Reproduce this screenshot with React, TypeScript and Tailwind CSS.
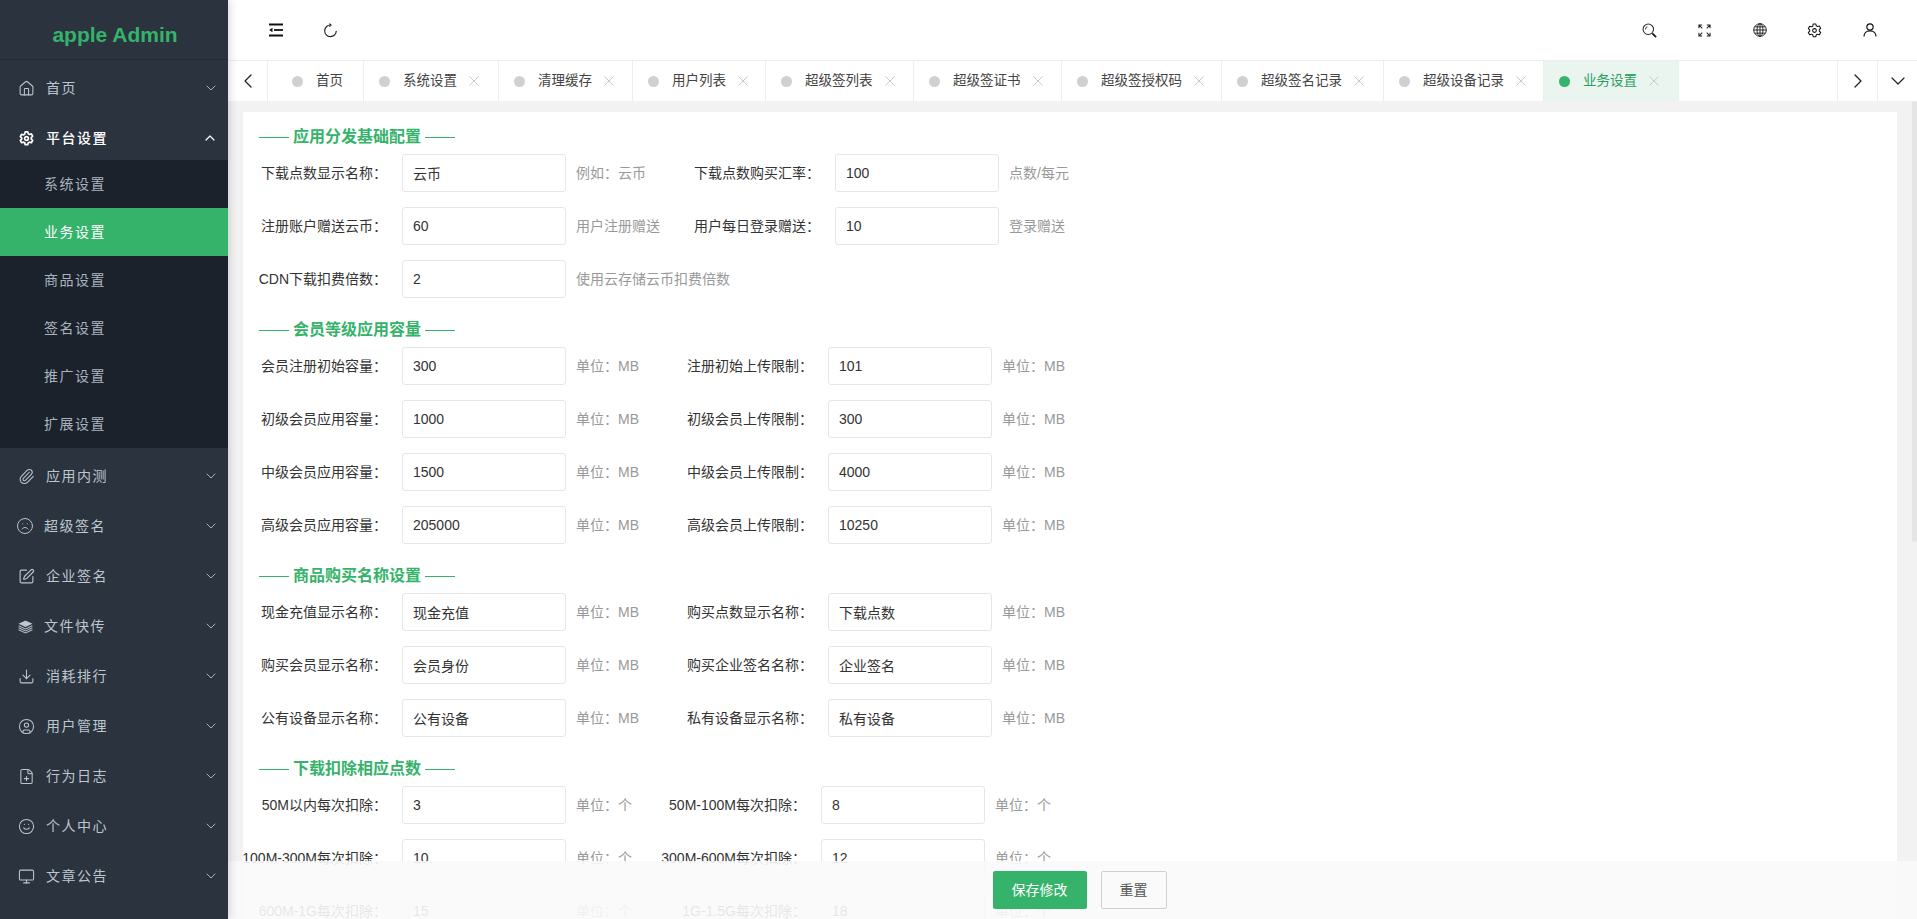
import React from "react";
import { ChevronDown, ChevronLeft, ChevronRight, ChevronUp, Home, Paperclip, Frown, SquarePen, Download, CircleUser, FilePlus, Smile, Monitor } from "lucide-react";

const ICON = "w-[17px] h-[17px] shrink-0";
const Layers = () => (
  <svg viewBox="0 0 16 16" className="w-[15px] h-[15px] shrink-0" fill="currentColor">
    <path d="M8 1.5 15.5 5 8 8.5.5 5z" />
    <path d="M.8 6.6 8 10l7.2-3.4.3 1L8 11.1.5 7.6z" />
    <path d="M.8 8.8 8 12.2l7.2-3.4.3 1L8 13.3.5 9.8z" />
    <path d="M.8 11 8 14.4l7.2-3.4.3 1L8 15.5.5 12z" />
  </svg>
);
const IndentIcon = () => (
  <svg viewBox="0 0 16 14" className="w-[16px] h-[14px]" fill="none">
    <path d="M1 1.5h14M1 12.5h14" stroke="#111" strokeWidth="1.8" />
    <path d="M6 7h9" stroke="#111" strokeWidth="1.8" />
    <path d="M4.5 4.8v4.4L1.2 7z" fill="#111" />
  </svg>
);
const ReloadIcon = () => (
  <svg viewBox="0 0 16 16" className="w-[15px] h-[15px]" fill="none" stroke="#222" strokeWidth="1.2">
    <path d="M8.4 2.2A6.2 6.2 0 1 0 14.2 8.4" />
    <path d="M6.8.6 8.6 2.2 6.8 3.8" strokeWidth="1.1" />
  </svg>
);
const SearchIcon = () => (
  <svg viewBox="0 0 16 16" className="w-[15px] h-[15px]" fill="none" stroke="#222">
    <circle cx="6.7" cy="6.7" r="5.6" strokeWidth="1.1" />
    <path d="M3.7 6.8a3 3 0 0 1 2-3" strokeWidth="1" />
    <path d="m11 11 4 4" strokeWidth="2" />
  </svg>
);
const FullIcon = () => (
  <svg viewBox="0 0 14 14" className="w-[13px] h-[13px]" fill="none" stroke="#222" strokeWidth="1.1">
    <path d="M1 4.5V1h3.5M1 1l3.6 3.6M13 4.5V1H9.5M13 1 9.4 4.6M1 9.5V13h3.5M1 13l3.6-3.6M13 9.5V13H9.5M13 13 9.4 9.4" />
  </svg>
);
const GlobeIcon = () => (
  <svg viewBox="0 0 16 16" className="w-[14px] h-[14px]" fill="none" stroke="#111" strokeWidth="1">
    <circle cx="8" cy="8" r="7.2" />
    <ellipse cx="8" cy="8" rx="3.4" ry="7.2" />
    <path d="M8 .8v14.4M.8 8h14.4M1.8 4.4h12.4M1.8 11.6h12.4" />
  </svg>
);
const GearShape = ({ className, sw }: { className: string; sw: number }) => (
  <svg viewBox="0 0 16 16" className={className} fill="none" stroke="currentColor" strokeWidth={sw} strokeLinejoin="round">
    <path d="M6.6 1h2.8l.5 2 1.3.7 2-.6 1.4 2.5-1.5 1.4v1.6l1.5 1.4-1.4 2.5-2-.6-1.3.7-.5 2H6.6l-.5-2-1.3-.7-2 .6-1.4-2.5 1.5-1.4V7.4L1.4 6l1.4-2.5 2 .6 1.3-.7z" />
    <circle cx="8" cy="8" r="2" />
  </svg>
);
const UserIcon = () => (
  <svg viewBox="0 0 14 14" className="w-[14px] h-[14px]" fill="none" stroke="#111" strokeWidth="1.2">
    <circle cx="7" cy="4" r="3.2" />
    <path d="M1 13.5c0-3.2 2.4-5.7 6-5.7s6 2.5 6 5.7" />
  </svg>
);
const CloseIcon = () => (
  <svg viewBox="0 0 10 10" className="w-[10px] h-[10px] ml-[12px] shrink-0" fill="none" stroke="#c8c8c8" strokeWidth="1">
    <path d="M.5.5l9 9M9.5.5l-9 9" />
  </svg>
);

const nav1 = [{ label: "首页", icon: <Home className={ICON} strokeWidth={1.5} /> }];
const nav2 = [
  { label: "应用内测", icon: <Paperclip className={ICON} strokeWidth={1.5} /> },
  { label: "超级签名", icon: <Frown className="w-[18px] h-[18px] shrink-0" strokeWidth={1.3} />, shift: true },
  { label: "企业签名", icon: <SquarePen className={ICON} strokeWidth={1.6} /> },
  { label: "文件快传", icon: <Layers />, shift: true },
  { label: "消耗排行", icon: <Download className={ICON} strokeWidth={1.5} /> },
  { label: "用户管理", icon: <CircleUser className={ICON} strokeWidth={1.5} /> },
  { label: "行为日志", icon: <FilePlus className={ICON} strokeWidth={1.5} /> },
  { label: "个人中心", icon: <Smile className={ICON} strokeWidth={1.5} /> },
  { label: "文章公告", icon: <Monitor className={ICON} strokeWidth={1.5} /> },
];
const subs = ["系统设置", "业务设置", "商品设置", "签名设置", "推广设置", "扩展设置"];

const NavItem = ({ label, icon, shift }: { label: string; icon: React.ReactNode; shift?: boolean }) => (
  <div className="flex items-center h-[50px] text-[#bcc6d0]">
    <span className={shift ? "w-[18px] ml-[16px] flex justify-center" : "w-[18px] ml-[17px] flex justify-center"}>{icon}</span>
    <span className={shift ? "ml-[10px] text-[14px] tracking-[1.5px]" : "ml-[11px] text-[14px] tracking-[1.5px]"}>{label}</span>
    <ChevronDown className="w-[16px] h-[16px] ml-auto mr-[9px]" strokeWidth={1.3} />
  </div>
);

const tabs: { label: string; w: string; close?: boolean; active?: boolean }[] = [
  { label: "首页", w: "w-[96px] pl-[24px]" },
  { label: "系统设置", w: "w-[135px] pl-[15px]", close: true },
  { label: "清理缓存", w: "w-[134px] pl-[15px]", close: true },
  { label: "用户列表", w: "w-[133px] pl-[15px]", close: true },
  { label: "超级签列表", w: "w-[148px] pl-[15px]", close: true },
  { label: "超级签证书", w: "w-[148px] pl-[15px]", close: true },
  { label: "超级签授权码", w: "w-[160px] pl-[15px]", close: true },
  { label: "超级签名记录", w: "w-[162px] pl-[15px]", close: true },
  { label: "超级设备记录", w: "w-[160px] pl-[15px]", close: true },
  { label: "业务设置", w: "w-[135px] pl-[15px]", close: true, active: true },
];

type Row = [string, string, string, string?, string?, string?];
const Field = ({ value }: { value: string }) => (
  <input
    readOnly
    defaultValue={value}
    className="w-[164px] h-[38px] border border-[#e6e6e6] rounded-[3px] pl-[10px] text-[14px] text-[#333] bg-white outline-none"
  />
);

const Section = ({ title, rows, cols }: { title: string; rows: Row[]; cols: string }) => (
  <section className="mb-[20px]">
    <h3 className="flex items-center h-[24px] mb-[5px] ml-[16px] text-[16px] font-bold text-[#35b36a]">
      <span className="w-[30px] h-px bg-[#35b36a]" />
      <span className="mx-[4px]">{title}</span>
      <span className="w-[30px] h-px bg-[#35b36a]" />
    </h3>
    <div className={`grid ${cols} gap-y-[15px] items-center text-[14px]`}>
      {rows.map((r) => (
        <React.Fragment key={r[0]}>
          <label className="pr-[15px] flex justify-end whitespace-nowrap text-[#333]">{r[0]}</label>
          <Field value={r[1]} />
          <div className="flex items-center justify-between min-w-0">
            <span className="ml-[10px] whitespace-nowrap text-[#999]">{r[2]}</span>
            {r[3] && <label className="pr-[15px] whitespace-nowrap text-[#333]">{r[3]}</label>}
          </div>
          {r[3] ? <Field value={r[4] as string} /> : <span />}
          <span className="ml-[10px] whitespace-nowrap text-[#999]">{r[5] ?? ""}</span>
        </React.Fragment>
      ))}
    </div>
  </section>
);

export default function App() {
  return (
    <div
      className="flex h-screen w-full overflow-hidden bg-white"
      style={{ fontFamily: '"Liberation Sans", "Noto Sans CJK SC", sans-serif' }}
    >
      <aside className="w-[228px] shrink-0 h-full bg-[#2a333e] flex flex-col z-20 shadow-[2px_0_8px_rgba(0,0,0,0.15)]">
        <div className="h-[60px] shrink-0 flex items-center justify-center border-b border-[#232b35] text-[21px] font-bold text-[#35b36a] pt-[10px] pl-[2px]">
          apple Admin
        </div>
        <div className="pt-[3px]">
          {nav1.map((n) => (
            <NavItem key={n.label} {...n} />
          ))}
          <div className="flex items-center h-[47px] -mt-px pt-[5px] text-white">
            <span className="w-[18px] ml-[17px] flex justify-center">
              <GearShape className="w-[15px] h-[15px] shrink-0" sw={1.8} />
            </span>
            <span className="ml-[11px] text-[14px] tracking-[1.5px] font-medium">平台设置</span>
            <ChevronUp className="w-[16px] h-[16px] ml-auto mr-[10px]" strokeWidth={1.8} />
          </div>
          <div className="bg-[#1b222b] mt-px">
            {subs.map((s) => (
              <div
                key={s}
                className={
                  s === "业务设置"
                    ? "h-[48px] flex items-center pl-[44px] text-[14px] tracking-[1.5px] bg-[#35b36a] text-white"
                    : "h-[48px] flex items-center pl-[44px] text-[14px] tracking-[1.5px] text-[#a9b3be]"
                }
              >
                {s}
              </div>
            ))}
          </div>
          <div className="pt-[3px]">
            {nav2.map((n) => (
              <NavItem key={n.label} {...n} />
            ))}
          </div>
        </div>
      </aside>

      <main className="flex-1 min-w-0 h-full flex flex-col relative">
        <header className="h-[60px] shrink-0 flex items-center justify-between pl-[20px] pr-[20px] text-[#111]">
          <div className="flex items-center">
            <button className="w-[55px] flex justify-center"><IndentIcon /></button>
            <button className="w-[55px] flex justify-center"><ReloadIcon /></button>
          </div>
          <div className="flex items-center">
            <button className="w-[55px] flex justify-center"><SearchIcon /></button>
            <button className="w-[55px] flex justify-center"><FullIcon /></button>
            <button className="w-[55px] flex justify-center"><GlobeIcon /></button>
            <button className="w-[55px] flex justify-center"><GearShape className="w-[15px] h-[15px]" sw={1.1} /></button>
            <button className="w-[55px] flex justify-center"><UserIcon /></button>
          </div>
        </header>

        <nav className="h-[41px] shrink-0 flex border-t border-[#eee] bg-white">
          <button className="w-[40px] shrink-0 border-r border-[#eee] flex items-center justify-center">
            <ChevronLeft className="w-[24px] h-[24px] text-[#222]" strokeWidth={1.3} />
          </button>
          {tabs.map((t) => (
            <div
              key={t.label}
              className={`${t.w} shrink-0 flex items-center text-[13.5px] ${
                t.active ? "bg-[#ebf5f0] text-[#2a9d5f]" : "border-r border-[#eee] text-[#444]"
              }`}
            >
              <span className={`w-[11px] h-[11px] shrink-0 rounded-full ${t.active ? "bg-[#35b36a]" : "bg-[#d0d0d0]"}`} />
              <span className="ml-[13px] whitespace-nowrap">{t.label}</span>
              {t.close && <CloseIcon />}
            </div>
          ))}
          <div className="flex-1" />
          <button className="w-[40px] shrink-0 border-l border-[#eee] flex items-center justify-center">
            <ChevronRight className="w-[24px] h-[24px] text-[#222]" strokeWidth={1.3} />
          </button>
          <button className="w-[40px] shrink-0 border-l border-[#eee] flex items-center justify-center">
            <ChevronDown className="w-[24px] h-[24px] text-[#222]" strokeWidth={1.2} />
          </button>
        </nav>

        <div className="flex-1 min-h-0 bg-[#f2f2f2] overflow-hidden pl-[15px] pr-[20px] pt-[11px] relative">
          <div className="bg-white pt-[13px] h-[1000px]">
            <Section
              title="应用分发基础配置"
              cols="grid-cols-[159px_164px_269px_164px_auto]"
              rows={[
                ["下载点数显示名称：", "云币", "例如：云币", "下载点数购买汇率：", "100", "点数/每元"],
                ["注册账户赠送云币：", "60", "用户注册赠送", "用户每日登录赠送：", "10", "登录赠送"],
                ["CDN下载扣费倍数：", "2", "使用云存储云币扣费倍数"],
              ]}
            />
            <Section
              title="会员等级应用容量"
              cols="grid-cols-[159px_164px_262px_164px_auto]"
              rows={[
                ["会员注册初始容量：", "300", "单位：MB", "注册初始上传限制：", "101", "单位：MB"],
                ["初级会员应用容量：", "1000", "单位：MB", "初级会员上传限制：", "300", "单位：MB"],
                ["中级会员应用容量：", "1500", "单位：MB", "中级会员上传限制：", "4000", "单位：MB"],
                ["高级会员应用容量：", "205000", "单位：MB", "高级会员上传限制：", "10250", "单位：MB"],
              ]}
            />
            <Section
              title="商品购买名称设置"
              cols="grid-cols-[159px_164px_262px_164px_auto]"
              rows={[
                ["现金充值显示名称：", "现金充值", "单位：MB", "购买点数显示名称：", "下载点数", "单位：MB"],
                ["购买会员显示名称：", "会员身份", "单位：MB", "购买企业签名名称：", "企业签名", "单位：MB"],
                ["公有设备显示名称：", "公有设备", "单位：MB", "私有设备显示名称：", "私有设备", "单位：MB"],
              ]}
            />
            <Section
              title="下载扣除相应点数"
              cols="grid-cols-[159px_164px_255px_164px_auto]"
              rows={[
                ["50M以内每次扣除：", "3", "单位：个", "50M-100M每次扣除：", "8", "单位：个"],
                ["100M-300M每次扣除：", "10", "单位：个", "300M-600M每次扣除：", "12", "单位：个"],
                ["600M-1G每次扣除：", "15", "单位：个", "1G-1.5G每次扣除：", "18", "单位：个"],
              ]}
            />
          </div>
          <div className="absolute right-0 top-0 w-[5px] h-[441px] rounded-[2px] bg-[#e5e5e5]" />
        </div>

        <div className="absolute left-0 right-0 bottom-0 h-[58px] bg-[#fafafa]/90 flex items-center justify-center gap-[14px] pl-[14px]">
          <button className="w-[94px] h-[38px] rounded-[2px] bg-[#35b36a] text-white text-[14px]">保存修改</button>
          <button className="w-[66px] h-[38px] rounded-[2px] border border-[#d0d0d0] bg-transparent text-[#555] text-[14px]">重置</button>
        </div>
      </main>
    </div>
  );
}
